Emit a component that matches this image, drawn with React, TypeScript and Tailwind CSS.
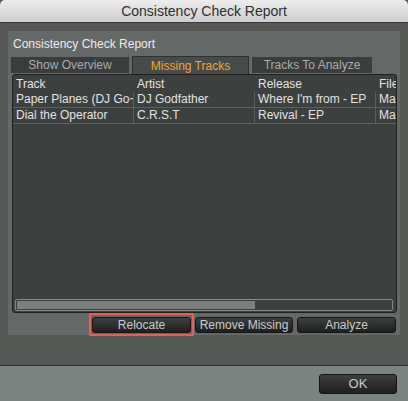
const columns = [
  { label: "Track", width: "w-[121px]" },
  { label: "Artist", width: "w-[121px]" },
  { label: "Release", width: "w-[121px]" },
  { label: "File", width: "flex-1" },
];

const rows = [
  ["Paper Planes (DJ Go~", "DJ Godfather", "Where I'm from - EP", "Mac"],
  ["Dial the Operator", "C.R.S.T", "Revival - EP", "Mac"],
];

const tabs = [
  { label: "Show Overview", active: false, w: "w-[118px]" },
  { label: "Missing Tracks", active: true, w: "w-[117px]" },
  { label: "Tracks To Analyze", active: false, w: "w-[120px]" },
];

const DarkButton = ({ label, className = "" }: { label: string; className?: string }) => (
  <div
    className={`flex items-center justify-center rounded-[3px] border border-[#151716] bg-gradient-to-b from-[#3d403f] to-[#1e2020] text-[12px] text-[#c9cbca] ${className}`}
  >
    {label}
  </div>
);

export default function App() {
  return (
    <div
      className="flex h-[401px] w-[408px] flex-col overflow-hidden bg-[#565856]"
      style={{ fontFamily: '"Liberation Sans", Arial, sans-serif' }}
    >
      {/* window title bar */}
      <div className="flex h-[23px] shrink-0 items-center justify-center rounded-t-[5px] border-b border-[#3a3a3a] bg-gradient-to-b from-[#ededed] to-[#cdcdcd] text-[14px] text-[#2f2f2f]">
        Consistency Check Report
      </div>

      <div className="flex-1 px-[8px] pt-[8px]">
        <div className="flex h-[304px] flex-col bg-[#646867]">
          <div className="flex h-[25px] items-center pl-[5px] text-[12px] text-[#ececec]">
            Consistency Check Report
          </div>

          {/* tabs */}
          <div className="flex h-[18px] items-start gap-[3px] pl-[3px]">
            {tabs.map((t) =>
              t.active ? (
                <div
                  key={t.label}
                  className={`${t.w} relative z-10 flex h-[18px] items-center justify-center border border-b-0 border-[#2e3130] bg-[#474c4b] text-[12px] text-[#f2a42a]`}
                >
                  {t.label}
                </div>
              ) : (
                <div
                  key={t.label}
                  className={`${t.w} mt-[1px] flex h-[16px] items-center justify-center bg-[#3a3d3c] text-[12px] text-[#a9acab]`}
                >
                  {t.label}
                </div>
              )
            )}
          </div>

          {/* table */}
          <div className="ml-[4px] flex h-[239px] w-[385px] flex-col overflow-hidden rounded-[3px] border border-[#1e2120] bg-[#3c403f]">
            <div className="flex h-[17px] shrink-0 items-center text-[12px] text-[#e2e2e2]">
              {columns.map((c) => (
                <div key={c.label} className={`${c.width} overflow-hidden whitespace-nowrap pl-[3px]`}>
                  {c.label}
                </div>
              ))}
            </div>
            {rows.map((r, i) => (
              <div key={i} className="flex h-[16px] shrink-0 items-center border-b border-[#5b5f5e] text-[12px] text-[#e2e2e2]">
                {r.map((cell, j) => (
                  <div
                    key={j}
                    className={`${columns[j].width} h-full overflow-hidden whitespace-nowrap pl-[3px] leading-[15px] ${
                      j < 3 ? "border-r border-[#5b5f5e]" : ""
                    }`}
                  >
                    {cell}
                  </div>
                ))}
              </div>
            ))}
            <div className="flex-1" />
            {/* horizontal scrollbar */}
            <div className="mb-[1px] ml-[2px] mr-[3px] h-[12px] rounded-[2px] border border-[#858988] bg-[#3c403f] p-[1px]">
              <div className="h-full w-[238px] bg-[#7b7f7e]" />
            </div>
          </div>

          {/* action buttons */}
          <div className="mt-[4px] flex justify-end gap-[4px] pr-[4px]">
            <div className="relative">
              <DarkButton label="Relocate" className="h-[16px] w-[99px]" />
              {/* highlight annotation */}
              <div className="pointer-events-none absolute -bottom-[3px] -left-[3px] -right-[3px] -top-[4px] rounded-[1px] border-2 border-[#ea5b5b]" />
            </div>
            <DarkButton label="Remove Missing" className="h-[16px] w-[98px]" />
            <DarkButton label="Analyze" className="h-[16px] w-[99px]" />
          </div>
        </div>
      </div>

      {/* bottom bar */}
      <div className="flex h-[36px] shrink-0 items-start justify-end border-t border-[#2c2e2d] bg-[#7b8381] pr-[11px] pt-[8px]">
        <DarkButton label="OK" className="h-[20px] w-[78px] text-[13px]" />
      </div>
    </div>
  );
}
